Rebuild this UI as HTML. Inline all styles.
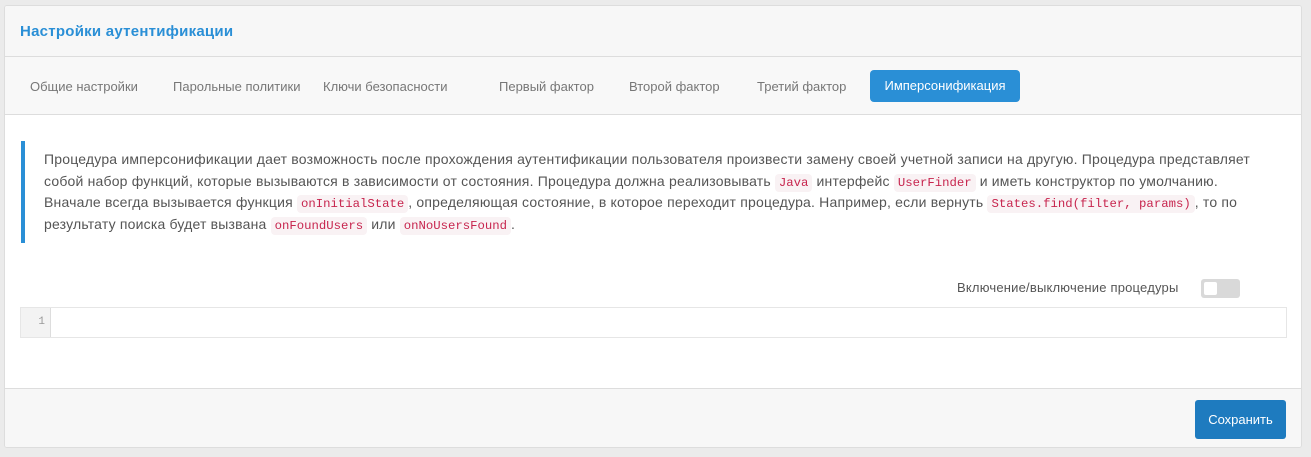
<!DOCTYPE html>
<html><head><meta charset="utf-8"><style>
*{box-sizing:border-box;margin:0;padding:0}
body{width:1311px;height:457px;background:#ebebeb;font-family:"Liberation Sans",Arial,sans-serif;position:relative;overflow:hidden;color:#555}
.panel{position:absolute;left:4px;top:5px;width:1298px;height:443px;background:#fff;border:1px solid #ddd;border-radius:3px;overflow:hidden}
.hdr{position:absolute;left:0;top:0;width:100%;height:51px;background:#f7f7f7;border-bottom:1px solid #ddd}
.hdr h1{position:absolute;left:15px;top:17px;font-size:15px;font-weight:bold;color:#2a8fd6;letter-spacing:0.25px}
.tabs{position:absolute;left:0;top:51px;width:100%;height:58px;background:#f8f8f8;border-bottom:1px solid #ddd}
.tab{position:absolute;top:22px;font-size:13px;color:#777;white-space:nowrap}
.act{position:absolute;left:865px;top:13px;width:150px;height:32px;background:#2a8fd6;border-radius:4px;color:#fff;font-size:13px;text-align:center;line-height:32px}
.note{position:absolute;left:16px;top:135px;width:1270px;height:102px;border-left:4px solid #2a8fd6}
.note .t{position:absolute;left:19px;top:8px;font-size:14px;letter-spacing:0.19px;line-height:21.5px;color:#555;white-space:nowrap}
code{font-family:"Liberation Mono",monospace;font-size:12.3px;letter-spacing:0;line-height:1;color:#c7254e;background:#f9f2f4;border-radius:4px;padding:2px 4px}
.lbl{position:absolute;left:952px;top:274px;font-size:13px;color:#555;letter-spacing:0.2px}
.tog{position:absolute;left:1196px;top:273px;width:39px;height:19px;background:#d9d9d9;border-radius:3px}
.tog i{position:absolute;left:3px;top:3px;width:13px;height:13px;background:#fff;border-radius:2px}
.ed{position:absolute;left:15px;top:301px;width:1267px;height:31px;border:1px solid #e6e6e6}
.gut{position:absolute;left:0;top:0;width:30px;height:29px;background:#f3f3f3;border-right:1px solid #ddd;font-family:"Liberation Mono",monospace;font-size:11px;color:#999;text-align:right;padding-right:5px;line-height:29px}
.ftr{position:absolute;left:0;top:382px;width:100%;height:61px;background:#f7f7f7;border-top:1px solid #ddd}
.btn{position:absolute;left:1190px;top:11px;width:91px;height:39px;background:#1e7bbf;border-radius:3px;color:#fff;font-size:13px;text-align:center;line-height:39px}
</style></head><body>
<div class="panel">
<div class="hdr"><h1>Настройки аутентификации</h1></div>
<div class="tabs">
<span class="tab" style="left:25px">Общие настройки</span>
<span class="tab" style="left:168px">Парольные политики</span>
<span class="tab" style="left:318px">Ключи безопасности</span>
<span class="tab" style="left:494px">Первый фактор</span>
<span class="tab" style="left:624px">Второй фактор</span>
<span class="tab" style="left:752px">Третий фактор</span>
<div class="act">Имперсонификация</div>
</div>
<div class="note"><div class="t">Процедура имперсонификации дает возможность после прохождения аутентификации пользователя произвести замену своей учетной записи на другую. Процедура представляет<br>собой набор функций, которые вызываются в зависимости от состояния. Процедура должна реализовывать <code>Java</code> интерфейс <code>UserFinder</code> и иметь конструктор по умолчанию.<br>Вначале всегда вызывается функция <code>onInitialState</code>, определяющая состояние, в которое переходит процедура. Например, если вернуть <code>States.find(filter, params)</code>, то по<br>результату поиска будет вызвана <code>onFoundUsers</code> или <code>onNoUsersFound</code>.</div></div>
<div class="lbl">Включение/выключение процедуры</div>
<div class="tog"><i></i></div>
<div class="ed"><div class="gut">1</div></div>
<div class="ftr"><div class="btn">Сохранить</div></div>
</div>
</body></html>
